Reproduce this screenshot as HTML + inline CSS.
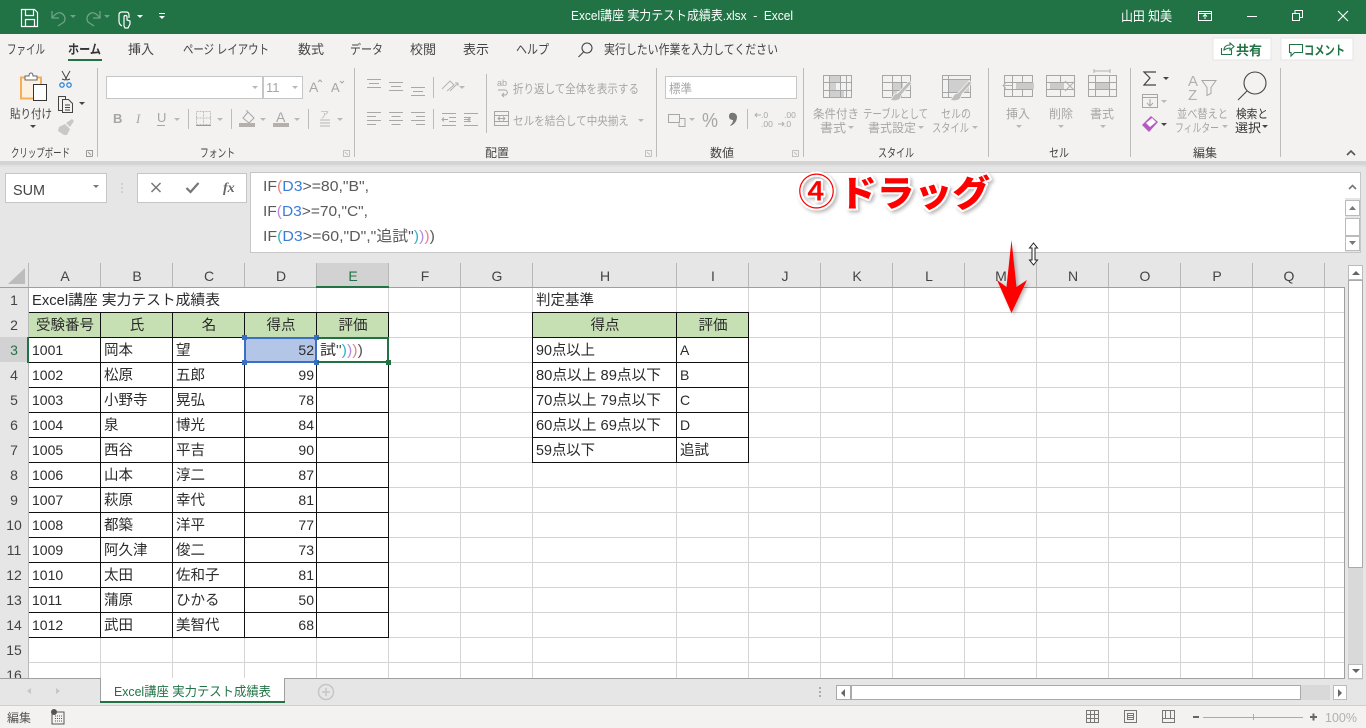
<!DOCTYPE html>
<html lang="ja"><head><meta charset="utf-8"><title>Excel</title>
<style>
html,body{margin:0;padding:0;background:#e6e6e6;overflow:hidden}
svg{display:block}
text{font-family:"Liberation Sans","Noto Sans CJK JP",sans-serif;white-space:pre}
.t{font-size:13px;fill:#444}
.d{font-size:12px;fill:#a6a6a6}
.g{font-size:12px;fill:#444}
.k{font-size:12px;fill:#333}
.h{font-size:14px;fill:#444;text-anchor:middle}
.c{font-size:14.5px;fill:#2b2b2b}
.n{font-size:14px;fill:#2b2b2b}
.cc{font-size:14.5px;fill:#2b2b2b;text-anchor:middle}
.r{font-size:14px;fill:#2b2b2b;text-anchor:end}
.f{font-size:15px;fill:#5a5a5a}
</style></head><body>
<svg xmlns="http://www.w3.org/2000/svg" width="1366" height="728" viewBox="0 0 1366 728">
<defs>
<path id="cr" d="M-3 0h6l-3 3z"/>
<filter id="sh" x="-30%" y="-30%" width="170%" height="170%"><feDropShadow dx="2" dy="2" stdDeviation="1.800" flood-color="#000" flood-opacity=".28"/></filter>
</defs>
<rect width="1366" height="728" fill="#e6e6e6"/>
<!-- title bar -->
<rect width="1366" height="34" fill="#217346"/>
<g fill="none" stroke="#fff" stroke-width="1.2">
<path d="M21.500 9.500h13l3 3v14h-16z"/><path d="M25.500 9.500v6h8v-6M25.500 26.500v-7h9v7"/>
<path d="M122 26c-2-1-3-3-3-5v-6c0-2 1-3 3-3h4c2 0 3 1 3 3v3M124 26v-9c0-2 3-2 3 0v3l3 1v3l-2 4h-3z"/>
</g>
<g fill="none" stroke="#6ea388" stroke-width="1.3">
<path d="M52 11v7h7M52 18c3-4 6-6 9-5 4 2 5 6 3 9l-6 4"/>
<path d="M100 11v7h-7M100 18c-3-4-6-6-9-5-4 2-5 6-3 9l6 4"/>
</g>
<g fill="#6ea388"><use href="#cr" x="73" y="15"/><use href="#cr" x="107" y="15"/></g>
<g fill="#fff"><use href="#cr" x="140" y="15"/><rect x="159" y="13" width="6" height="1"/><use href="#cr" x="162" y="16"/></g>
<text x="571" y="20" font-size="13" fill="#fff" textLength="222" lengthAdjust="spacingAndGlyphs">Excel講座 実力テスト成績表.xlsx  -  Excel</text>
<text x="1121" y="21" font-size="13.500" fill="#fff" textLength="51" lengthAdjust="spacingAndGlyphs">山田 知美</text>
<g fill="none" stroke="#fff" stroke-width="1">
<path d="M1198.500 11.500h13v9h-13zM1198.500 13.500h13M1205 19v-4M1203 16.500l2-2 2 2"/>
<path d="M1247 16.500h10"/>
<path d="M1292.500 13.500h7v7h-7zM1295 13v-2.500h7.500v7h-3"/>
<path d="M1338 11l10 10M1348 11l-10 10" stroke-width="1.100"/>
</g>
<!-- ribbon -->
<rect y="34" width="1366" height="127" fill="#f3f2f1"/>
<rect y="161" width="1366" height="4" fill="#d4d4d4"/>
<rect y="165" width="1366" height="2" fill="#e0e0e0"/>
<text class="t" x="7" y="54" textLength="38" lengthAdjust="spacingAndGlyphs">ファイル</text>
<text class="t" x="68" y="54" font-weight="700" textLength="33" lengthAdjust="spacingAndGlyphs" style="fill:#333">ホーム</text>
<rect x="68" y="59" width="34" height="2" fill="#217346"/>
<text class="t" x="128" y="54" textLength="26" lengthAdjust="spacingAndGlyphs">挿入</text>
<text class="t" x="183" y="54" textLength="86" lengthAdjust="spacingAndGlyphs">ページ レイアウト</text>
<text class="t" x="298" y="54" textLength="26" lengthAdjust="spacingAndGlyphs">数式</text>
<text class="t" x="350" y="54" textLength="33" lengthAdjust="spacingAndGlyphs">データ</text>
<text class="t" x="410" y="54" textLength="26" lengthAdjust="spacingAndGlyphs">校閲</text>
<text class="t" x="463" y="54" textLength="26" lengthAdjust="spacingAndGlyphs">表示</text>
<text class="t" x="516" y="54" textLength="33" lengthAdjust="spacingAndGlyphs">ヘルプ</text>
<g fill="none" stroke="#444" stroke-width="1.100"><circle cx="587" cy="48" r="5"/><path d="M583.500 52l-5 5"/></g>
<text class="t" x="604" y="54" textLength="174" lengthAdjust="spacingAndGlyphs">実行したい作業を入力してください</text>
<!-- share/comment -->
<rect x="1213" y="38" width="58" height="22" fill="#fff" stroke="#e4e4e4"/>
<rect x="1281" y="38" width="72" height="22" fill="#fff" stroke="#e4e4e4"/>
<g fill="none" stroke="#217346" stroke-width="1.100">
<path d="M1221.500 48v6.500h10v-5M1224 50c0-3 2-5 6-5v-2l4 3.500-4 3.500v-2c-3 0-4 1-6 2z"/>
<path d="M1289.500 44.500h13v8h-8l-3.500 3.500v-3.500h-1.500z"/>
</g>
<text x="1236" y="55" font-size="13" font-weight="700" fill="#217346" textLength="26" lengthAdjust="spacingAndGlyphs">共有</text>
<text x="1304" y="55" font-size="13" font-weight="700" fill="#217346" textLength="41" lengthAdjust="spacingAndGlyphs">コメント</text>
<!-- separators -->
<g fill="#bdbcbb"><rect x="97" y="68" width="1" height="89"/><rect x="354" y="68" width="1" height="89"/><rect x="656" y="68" width="1" height="89"/><rect x="803" y="68" width="1" height="89"/><rect x="988" y="68" width="1" height="89"/><rect x="1130" y="68" width="1" height="89"/><rect x="1280" y="68" width="1" height="89"/>
<rect x="188" y="109" width="1" height="20"/><rect x="231" y="109" width="1" height="20"/><rect x="308" y="109" width="1" height="20"/><rect x="433" y="77" width="1" height="21"/><rect x="433" y="109" width="1" height="20"/><rect x="486" y="74" width="1" height="59"/><rect x="747" y="109" width="1" height="20"/></g>
<!-- group labels -->
<text class="g" x="11" y="157" textLength="59" lengthAdjust="spacingAndGlyphs">クリップボード</text>
<text class="g" x="200" y="157" textLength="35" lengthAdjust="spacingAndGlyphs">フォント</text>
<text class="g" x="485" y="157" textLength="24" lengthAdjust="spacingAndGlyphs">配置</text>
<text class="g" x="710" y="157" textLength="24" lengthAdjust="spacingAndGlyphs">数値</text>
<text class="g" x="878" y="157" textLength="36" lengthAdjust="spacingAndGlyphs">スタイル</text>
<text class="g" x="1049" y="157" textLength="20" lengthAdjust="spacingAndGlyphs">セル</text>
<text class="g" x="1193" y="157" textLength="24" lengthAdjust="spacingAndGlyphs">編集</text>
<g fill="none" stroke="#9a9a9a"><path d="M86.500 150.500h6v6M86.500 150.500v6h6M88 152l3 3"/><path d="M343.500 150.500h6v6M343.500 150.500v6h6M345 152l3 3" stroke="#c0c0c0"/><path d="M645.500 150.500h6v6M645.500 150.500v6h6M647 152l3 3" stroke="#c0c0c0"/><path d="M792.500 150.500h6v6M792.500 150.500v6h6M794 152l3 3" stroke="#c0c0c0"/></g>
<path d="M1347 155l4-4 4 4" fill="none" stroke="#555" stroke-width="1.600"/>
<!-- clipboard -->
<path d="M21 77.500h20v21h-20z" fill="#fbf1e0" stroke="#f4ae55" stroke-width="2"/>
<path d="M25 76h4c0-4 4-4 4 0h4v4h-12z" fill="#fff" stroke="#666"/>
<rect x="33.500" y="84.500" width="13" height="16" fill="#fff" stroke="#333"/>
<text class="g" x="10" y="118" textLength="42" lengthAdjust="spacingAndGlyphs">貼り付け</text>
<g fill="#444"><use href="#cr" x="33" y="125"/><use href="#cr" x="82" y="102"/></g>
<g fill="none" stroke="#444"><path d="M62 71l5 9 3-1M70 71l-5 9-3-1"/><path d="M58.500 96.500h7v14h-7z"/><path d="M62.500 99.500h6l4 4v9h-10z" fill="#f3f2f1"/><path d="M65 105h5M65 107.500h5M65 110h5"/></g>
<circle cx="62" cy="85" r="2.200" fill="none" stroke="#2b88d8" stroke-width="1.300"/><circle cx="69" cy="85" r="2.200" fill="none" stroke="#2b88d8" stroke-width="1.300"/>
<path d="M59 127l6-3 5 5-3 6h-3l-6-4zM66 123l6-4 2 2-4 6z" fill="#c8c8c8"/>
<!-- font -->
<rect x="106.500" y="76.500" width="156" height="22" fill="#fff" stroke="#c6c6c6"/>
<rect x="263.500" y="76.500" width="39" height="22" fill="#fff" stroke="#c6c6c6"/>
<text x="266" y="92" font-size="13" fill="#a6a6a6">11</text>
<g fill="#b8b8b8"><use href="#cr" x="255" y="86"/><use href="#cr" x="295" y="86"/><use href="#cr" x="177" y="118"/><use href="#cr" x="220" y="118"/><use href="#cr" x="263" y="118"/><use href="#cr" x="297" y="118"/><use href="#cr" x="340" y="118"/><use href="#cr" x="462" y="86"/><use href="#cr" x="641" y="119"/><use href="#cr" x="692" y="118"/><use href="#cr" x="788" y="86"/><use href="#cr" x="851" y="126"/><use href="#cr" x="921" y="126"/><use href="#cr" x="975" y="126"/><use href="#cr" x="1019" y="125"/><use href="#cr" x="1061" y="125"/><use href="#cr" x="1103" y="125"/><use href="#cr" x="1164" y="100"/><use href="#cr" x="1225" y="125"/></g>
<g fill="#444"><use href="#cr" x="1166" y="77"/><use href="#cr" x="1164" y="123"/><use href="#cr" x="1265" y="125"/></g>
<text x="309" y="92" font-size="14" fill="#a6a6a6">A</text><text x="331" y="92" font-size="13" fill="#a6a6a6">A</text>
<path d="M318 82l2-2 2 2M340 81l2 2 2-2" fill="none" stroke="#a6a6a6"/>
<text x="113" y="123" font-size="13" font-weight="700" fill="#a6a6a6">B</text>
<text x="136" y="123" font-size="13" font-style="italic" style="font-family:'Liberation Serif',serif" fill="#a6a6a6">I</text>
<text x="157" y="122" font-size="13" fill="#a6a6a6">U</text><rect x="157" y="125" width="8" height="1" fill="#a6a6a6"/>
<path d="M196.500 111.500h14v13h-14zM203.500 111.500v13M196.500 118h14" fill="none" stroke="#bdbdbd" stroke-dasharray="2 1"/><rect x="196" y="125" width="15" height="1" fill="#999"/>
<path d="M243 118l5-6 6 6-5 5zM247 112v-2" fill="none" stroke="#a6a6a6"/><rect x="239" y="123" width="16" height="4" fill="#b3b0ad"/>
<text x="276" y="122" font-size="14" fill="#a6a6a6">A</text><rect x="273" y="123" width="16" height="4" fill="#b3b0ad"/>
<text x="320" y="118" font-size="9" fill="#b5b5b5">ア</text><path d="M320 120h10M320 123h10M320 126h10" stroke="#b5b5b5"/>
<!-- align -->
<path d="M367 79.500h14M369 83.500h10M367 87.500h14M389 82.500h14M391 86.500h10M389 90.500h14M411 87.500h14M413 91.500h10M411 95.500h14M367 112.500h14M367 116.500h9M367 120.500h14M367 124.500h9M389 112.500h14M391.500 116.500h9M389 120.500h14M391.500 124.500h9M411 112.500h14M416 116.500h9M411 120.500h14M416 124.500h9M442 113.500h14M449 117.500h7M449 121.500h7M442 125.500h14M464 113.500h14M464 117.500h7M464 121.500h7M464 125.500h14M448 119.500h-6m2-2l-2 2 2 2M464 119.500h6m-2-2l2 2-2 2" fill="none" stroke="#a8a8a8"/>
<path d="M442 89l8-8 4 4-7 6M450 91l8-8m-3 0h3v3" fill="none" stroke="#b5b5b5"/>
<text x="497" y="86" font-size="9" fill="#a6a6a6">ab</text><path d="M498 90h7c3 0 3 5 0 5h-2m1-2l-2 2 2 2" fill="none" stroke="#a6a6a6"/>
<text class="d" x="513" y="93" textLength="126" lengthAdjust="spacingAndGlyphs">折り返して全体を表示する</text>
<path d="M494.500 111.500h14v14h-14zM494.500 115.500h14M494.500 121.500h14M498 118.500h7m-5-2l-2 2 2 2m3-4l2 2-2 2" fill="none" stroke="#a6a6a6"/>
<text class="d" x="513" y="125" textLength="116" lengthAdjust="spacingAndGlyphs">セルを結合して中央揃え</text>
<!-- number -->
<rect x="665.500" y="76.500" width="131" height="22" fill="#fff" stroke="#c6c6c6"/>
<text class="d" x="669" y="93" textLength="23" lengthAdjust="spacingAndGlyphs" style="font-size:12.500px">標準</text>
<path d="M668.500 114.500h11v8h-11zM680 118.500h5v8h-6v-3" fill="none" stroke="#a6a6a6"/>
<text x="702" y="127" font-size="20" fill="#a6a6a6" textLength="16" lengthAdjust="spacingAndGlyphs">%</text>
<path d="M731 113c3-1 6 1 6 4 0 4-3 8-7 9 1-2 3-3 3-6-2 0-4-1-4-3.500 0-2 1-3.500 2-3.500z" fill="#777"/>
<text x="761" y="118" font-size="8.500" fill="#a6a6a6">.0</text><text x="761" y="127" font-size="8.500" fill="#a6a6a6">.00</text><text x="784" y="118" font-size="8.500" fill="#a6a6a6">.00</text><text x="784" y="127" font-size="8.500" fill="#a6a6a6">.0</text>
<path d="M761 115h-6m2-2l-2 2 2 2M778 124h6m-2-2l2 2-2 2" fill="none" stroke="#b0b0b0"/>
<!-- styles -->
<g fill="#cfcfcf"><path d="M829 75h11v7h-11zM829 82h7v8h-7zM829 90h15v7h-15z"/><path d="M892 82h11v8h-11zM892 90h5v7h-5z"/><path d="M949 79h20v13h-20z"/></g>
<path d="M823.500 75.500h28v22h-28zM823.500 82.500h28M823.500 90.500h28M829.500 75.500v22M840.500 75.500v22M846.500 75.500v22M882.500 75.500h28v22h-28zM882.500 82.500h28M882.500 90.500h28M892.500 75.500v22M901.500 75.500v22M942.500 75.500h28v22h-28zM942.500 79.500h28M942.500 92.500h28M948.500 75.500v22M1004.500 75.500h28v21h-28zM1004.500 82.500h28M1004.500 89.500h28M1012.500 75.500v21M1022.500 75.500v21M1046.500 75.500h28v21h-28zM1046.500 82.500h28M1046.500 89.500h28M1060.500 75.500v21M1088.500 75.500h28v21h-28zM1088.500 82.500h28M1088.500 89.500h28M1095.500 75.500v21M1109.500 75.500v21" fill="none" stroke="#a6a6a6"/>
<path d="M912 83l-10 11-2 5c-3 2-7 2-10 1 3-2 3-5 5-6l3-1 11-12zM972 83l-10 11-2 5c-3 2-7 2-10 1 3-2 3-5 5-6l3-1 11-12z" fill="#bdbdbd" stroke="#f3f2f1" stroke-width=".8"/>
<g fill="#cacaca"><rect x="1016" y="83" width="18" height="6"/><rect x="1050" y="83" width="14" height="6"/><rect x="1096" y="83" width="13" height="6"/></g>
<path d="M1012 85.500h-9m3-3l-3 3 3 3" fill="#f3f2f1" stroke="#b0b0b0"/>
<path d="M1065 81l10 10m0-10l-10 10M1094 71h16M1094 69v4M1110 69v4" fill="none" stroke="#b0b0b0"/>
<text class="d" x="813" y="118" textLength="46" lengthAdjust="spacingAndGlyphs">条件付き</text>
<text class="d" x="820" y="132" textLength="26" lengthAdjust="spacingAndGlyphs">書式</text>
<text class="d" x="863" y="118" textLength="65" lengthAdjust="spacingAndGlyphs">テーブルとして</text>
<text class="d" x="868" y="132" textLength="48" lengthAdjust="spacingAndGlyphs">書式設定</text>
<text class="d" x="941" y="118" textLength="30" lengthAdjust="spacingAndGlyphs">セルの</text>
<text class="d" x="932" y="132" textLength="37" lengthAdjust="spacingAndGlyphs">スタイル</text>
<text class="d" x="1006" y="118" textLength="24" lengthAdjust="spacingAndGlyphs">挿入</text>
<text class="d" x="1049" y="118" textLength="24" lengthAdjust="spacingAndGlyphs">削除</text>
<text class="d" x="1090" y="118" textLength="24" lengthAdjust="spacingAndGlyphs">書式</text>
<!-- editing -->
<path d="M1156 72h-12l6 6-6 7h12" fill="none" stroke="#444" stroke-width="1.200"/>
<path d="M1142.500 94.500h15v13h-15zM1142.500 97.500h15M1150 99v7m-3-3l3 3 3-3" fill="none" stroke="#a6a6a6"/>
<path d="M1142 125l9-9 7 6-9 10z" fill="#b657c4"/><path d="M1146 123l6-5 4 4-6 5z" fill="#fff"/>
<text x="1188" y="86" font-size="15" fill="#b0b0b0">A</text><text x="1188" y="100" font-size="15" fill="#b0b0b0">Z</text>
<path d="M1202 80.500h14l-5 7v6l-4 2v-8z" fill="none" stroke="#a6a6a6"/>
<text class="d" x="1177" y="118" textLength="51" lengthAdjust="spacingAndGlyphs">並べ替えと</text>
<text class="d" x="1175" y="132" textLength="44" lengthAdjust="spacingAndGlyphs">フィルター</text>
<g fill="none" stroke="#444" stroke-width="1.100"><circle cx="1255" cy="83" r="11"/><path d="M1247 91l-9 9"/></g>
<text class="k" x="1236" y="118" textLength="32" lengthAdjust="spacingAndGlyphs">検索と</text>
<text class="k" x="1235" y="132" textLength="26" lengthAdjust="spacingAndGlyphs">選択</text>
<!-- formula bar -->
<rect x="5.500" y="173.500" width="101" height="29" fill="#fff" stroke="#c6c6c6"/>
<text x="13" y="195" font-size="15" fill="#444" textLength="32" lengthAdjust="spacingAndGlyphs">SUM</text>
<use href="#cr" x="96" y="185" fill="#777"/>
<path d="M122 183.500v1M122 187.500v1M122 191.500v1" stroke="#aaa" stroke-width="1.500"/>
<rect x="137.500" y="173.500" width="109" height="29" fill="#fff" stroke="#c6c6c6"/>
<path d="M151.500 183l9 9m0-9l-9 9" stroke="#777" stroke-width="1.500" fill="none"/>
<path d="M186.500 188l4 4 8-9" stroke="#777" stroke-width="2.200" fill="none"/>
<text x="223" y="192" font-size="14" font-style="italic" font-weight="700" fill="#666" style="font-family:'Liberation Serif',serif">fx</text>
<rect x="250.500" y="172.500" width="1110" height="80" fill="#fff" stroke="#c6c6c6"/>
<text class="f" x="263" y="191" textLength="106" lengthAdjust="spacingAndGlyphs">IF<tspan fill="#e8828a">(</tspan><tspan fill="#3b7dd8">D3</tspan>&gt;=80,"B",</text>
<text class="f" x="263" y="216" textLength="105" lengthAdjust="spacingAndGlyphs">IF<tspan fill="#b48be0">(</tspan><tspan fill="#3b7dd8">D3</tspan>&gt;=70,"C",</text>
<text class="f" x="263" y="241" textLength="172" lengthAdjust="spacingAndGlyphs">IF<tspan fill="#35b3c4">(</tspan><tspan fill="#3b7dd8">D3</tspan>&gt;=60,"D","追試"<tspan fill="#35b3c4">)</tspan><tspan fill="#b48be0">)</tspan><tspan fill="#e8828a">)</tspan><tspan fill="#5a5a5a">)</tspan></text>
<rect x="1345" y="198" width="15" height="54" fill="#e6e6e6"/>
<rect x="1345.500" y="200.500" width="14" height="15" fill="#fff" stroke="#bbb"/>
<rect x="1345.500" y="218.500" width="14" height="17" fill="#fff" stroke="#bbb"/>
<rect x="1345.500" y="236.500" width="14" height="14" fill="#fff" stroke="#bbb"/>
<path d="M1349 189l3.500-3.500 3.500 3.500" fill="none" stroke="#777" stroke-width="1.600"/>
<path d="M1349 210h7l-3.500-4zM1349 241h7l-3.500 4z" fill="#777"/>
<!-- sheet -->
<rect x="29" y="288" width="1315" height="390" fill="#fff"/>
<rect x="0" y="263" width="1345" height="25" fill="#e6e6e6"/>
<rect x="316" y="263" width="73" height="24" fill="#d2d2d2"/>
<rect x="0" y="337" width="28" height="25" fill="#d2d2d2"/>
<path d="M25 268v16h-17z" fill="#bcbcbc"/>
<path d="M28.500 263v415M100.500 263v24M172.500 263v24M244.500 263v24M316.500 263v24M388.500 263v24M460.500 263v24M532.500 263v24M676.500 263v24M748.500 263v24M820.500 263v24M892.500 263v24M964.500 263v24M1036.500 263v24M1108.500 263v24M1180.500 263v24M1252.500 263v24M1324.500 263v24" stroke="#b8b8b8" fill="none"/>
<path d="M0 287.500h1345M1344.500 287v391" stroke="#9f9f9f" fill="none"/>
<path d="M29 312.500h1315M29 337.500h1315M29 362.500h1315M29 387.500h1315M29 412.500h1315M29 437.500h1315M29 462.500h1315M29 487.500h1315M29 512.500h1315M29 537.500h1315M29 562.500h1315M29 587.500h1315M29 612.500h1315M29 637.500h1315M29 662.500h1315M100.500 288v390M172.500 288v390M244.500 288v390M316.500 288v390M388.500 288v390M460.500 288v390M532.500 288v390M676.500 288v390M748.500 288v390M820.500 288v390M892.500 288v390M964.500 288v390M1036.500 288v390M1108.500 288v390M1180.500 288v390M1252.500 288v390M1324.500 288v390" stroke="#d4d4d4" fill="none"/>
<rect x="29" y="288" width="360" height="24" fill="#fff"/><path d="M316.500 288v24M388.500 288v24" stroke="#d4d4d4"/>
<rect x="29" y="313" width="359" height="24" fill="#c6dfb3"/>
<rect x="533" y="313" width="215" height="24" fill="#c6dfb3"/>
<path d="M29 312.500h360M29 337.500h360M29 362.500h360M29 387.500h360M29 412.500h360M29 437.500h360M29 462.500h360M29 487.500h360M29 512.500h360M29 537.500h360M29 562.500h360M29 587.500h360M29 612.500h360M29 637.500h360M100.500 312v326M172.500 312v326M244.500 312v326M316.500 312v326M388.500 312v326M532 312.500h217M532 337.500h217M532 362.500h217M532 387.500h217M532 412.500h217M532 437.500h217M532 462.500h217M532.500 312v151M676.500 312v151M748.500 312v151" stroke="#111" fill="none"/>
<!-- headers -->
<g>
<text class="h" x="65" y="281">A</text><text class="h" x="137" y="281">B</text><text class="h" x="209" y="281">C</text><text class="h" x="281" y="281">D</text><text class="h" x="353" y="281" style="fill:#217346">E</text><text class="h" x="425" y="281">F</text><text class="h" x="497" y="281">G</text><text class="h" x="605" y="281">H</text><text class="h" x="713" y="281">I</text><text class="h" x="785" y="281">J</text><text class="h" x="857" y="281">K</text><text class="h" x="929" y="281">L</text><text class="h" x="1001" y="281">M</text><text class="h" x="1073" y="281">N</text><text class="h" x="1145" y="281">O</text><text class="h" x="1217" y="281">P</text><text class="h" x="1289" y="281">Q</text>
<text class="h" x="14" y="305">1</text><text class="h" x="14" y="330">2</text><text class="h" x="14" y="355" style="fill:#217346">3</text><text class="h" x="14" y="380">4</text><text class="h" x="14" y="405">5</text><text class="h" x="14" y="430">6</text><text class="h" x="14" y="455">7</text><text class="h" x="14" y="480">8</text><text class="h" x="14" y="505">9</text><text class="h" x="14" y="530">10</text><text class="h" x="14" y="555">11</text><text class="h" x="14" y="580">12</text><text class="h" x="14" y="605">13</text><text class="h" x="14" y="630">14</text><text class="h" x="14" y="655">15</text><text class="h" x="14" y="680">16</text>
</g>
<rect x="316" y="286" width="73" height="2" fill="#217346"/>
<rect x="27" y="337" width="2" height="26" fill="#217346"/>
<!-- cells -->
<text class="c" x="32" y="305" textLength="188" lengthAdjust="spacingAndGlyphs">Excel講座 実力テスト成績表</text>
<text class="cc" x="65" y="330" textLength="58" lengthAdjust="spacingAndGlyphs">受験番号</text><text class="cc" x="137" y="330">氏</text><text class="cc" x="209" y="330">名</text><text class="cc" x="281" y="330">得点</text><text class="cc" x="353" y="330">評価</text>
<text class="n" x="32" y="355">1001</text><text class="c" x="104" y="355">岡本</text><text class="c" x="176" y="355">望</text>
<text class="n" x="32" y="380">1002</text><text class="c" x="104" y="380">松原</text><text class="c" x="176" y="380">五郎</text><text class="r" x="314" y="380">99</text>
<text class="n" x="32" y="405">1003</text><text class="c" x="104" y="405">小野寺</text><text class="c" x="176" y="405">晃弘</text><text class="r" x="314" y="405">78</text>
<text class="n" x="32" y="430">1004</text><text class="c" x="104" y="430">泉</text><text class="c" x="176" y="430">博光</text><text class="r" x="314" y="430">84</text>
<text class="n" x="32" y="455">1005</text><text class="c" x="104" y="455">西谷</text><text class="c" x="176" y="455">平吉</text><text class="r" x="314" y="455">90</text>
<text class="n" x="32" y="480">1006</text><text class="c" x="104" y="480">山本</text><text class="c" x="176" y="480">淳二</text><text class="r" x="314" y="480">87</text>
<text class="n" x="32" y="505">1007</text><text class="c" x="104" y="505">萩原</text><text class="c" x="176" y="505">幸代</text><text class="r" x="314" y="505">81</text>
<text class="n" x="32" y="530">1008</text><text class="c" x="104" y="530">都築</text><text class="c" x="176" y="530">洋平</text><text class="r" x="314" y="530">77</text>
<text class="n" x="32" y="555">1009</text><text class="c" x="104" y="555">阿久津</text><text class="c" x="176" y="555">俊二</text><text class="r" x="314" y="555">73</text>
<text class="n" x="32" y="580">1010</text><text class="c" x="104" y="580">太田</text><text class="c" x="176" y="580">佐和子</text><text class="r" x="314" y="580">81</text>
<text class="n" x="32" y="605">1011</text><text class="c" x="104" y="605">蒲原</text><text class="c" x="176" y="605">ひかる</text><text class="r" x="314" y="605">50</text>
<text class="n" x="32" y="630">1012</text><text class="c" x="104" y="630">武田</text><text class="c" x="176" y="630">美智代</text><text class="r" x="314" y="630">68</text>
<text class="c" x="536" y="305">判定基準</text>
<text class="cc" x="605" y="330">得点</text><text class="cc" x="713" y="330">評価</text>
<text class="c" x="536" y="355" textLength="59" lengthAdjust="spacingAndGlyphs">90点以上</text><text class="n" x="680" y="355">A</text>
<text class="c" x="536" y="380" textLength="125" lengthAdjust="spacingAndGlyphs">80点以上 89点以下</text><text class="n" x="680" y="380">B</text>
<text class="c" x="536" y="405" textLength="125" lengthAdjust="spacingAndGlyphs">70点以上 79点以下</text><text class="n" x="680" y="405">C</text>
<text class="c" x="536" y="430" textLength="125" lengthAdjust="spacingAndGlyphs">60点以上 69点以下</text><text class="n" x="680" y="430">D</text>
<text class="c" x="536" y="455" textLength="59" lengthAdjust="spacingAndGlyphs">59点以下</text><text class="c" x="680" y="455">追試</text>
<!-- selection -->
<rect x="245" y="338" width="71" height="24" fill="#b4c6e7"/>
<text class="r" x="314" y="355">52</text>
<rect x="245" y="338" width="71" height="24" fill="none" stroke="#3a6fc4" stroke-width="2"/>
<g fill="#3a6fc4"><rect x="242" y="335" width="5" height="5"/><rect x="314" y="335" width="5" height="5"/><rect x="242" y="360" width="5" height="5"/><rect x="314" y="360" width="5" height="5"/></g>
<path d="M317 338h71v24h-71" fill="none" stroke="#217346" stroke-width="2"/>
<rect x="386" y="360" width="5" height="5" fill="#217346"/>
<text class="c" x="320" y="355" textLength="43" lengthAdjust="spacingAndGlyphs">試<tspan fill="#555">"</tspan><tspan fill="#35b3c4">)</tspan><tspan fill="#b48be0">)</tspan><tspan fill="#e8828a">)</tspan><tspan fill="#555">)</tspan></text>
<!-- tab bar -->
<rect x="0" y="678" width="1345" height="28" fill="#e6e6e6"/>
<rect x="0" y="678" width="100" height="1" fill="#9f9f9f"/><rect x="285" y="678" width="1060" height="1" fill="#9f9f9f"/>
<path d="M100.500 678v25M284.500 678v25" stroke="#9f9f9f"/>
<rect x="101" y="678" width="183" height="23" fill="#fff"/>
<rect x="100" y="701" width="185" height="2" fill="#217346"/>
<text x="114" y="696" font-size="13" fill="#217346" textLength="157" lengthAdjust="spacingAndGlyphs">Excel講座 実力テスト成績表</text>
<path d="M31 688v6l-4-3zM56 688v6l4-3z" fill="#c6c6c6"/>
<circle cx="326" cy="692" r="7.500" fill="none" stroke="#c6c6c6" stroke-width="1.500"/><path d="M326 688v8M322 692h8" stroke="#c6c6c6" stroke-width="1.500"/>
<path d="M820 687v2M820 691v2M820 695v2" stroke="#999" stroke-width="1.500"/>
<rect x="836.500" y="685.500" width="14" height="14" fill="#fff" stroke="#aaa"/>
<rect x="851.500" y="685.500" width="449" height="14" fill="#fff" stroke="#aaa"/>
<rect x="1301" y="685" width="29" height="15" fill="#d9d9d9"/>
<rect x="1333.500" y="685.500" width="13" height="14" fill="#fff" stroke="#bbb"/>
<path d="M845 689v8l-4-4zM1338 689v8l4-4z" fill="#666"/>
<!-- v scrollbar -->
<rect x="1348" y="265" width="15" height="415" fill="#d9d9d9"/>
<rect x="1348.500" y="265.500" width="14" height="14" fill="#fff" stroke="#bbb"/>
<rect x="1348.500" y="280.500" width="14" height="287" fill="#fff" stroke="#aaa"/>
<rect x="1348.500" y="664.500" width="14" height="14" fill="#fff" stroke="#bbb"/>
<path d="M1352 275h8l-4-4zM1352 669h8l-4 4z" fill="#666"/>
<!-- status -->
<rect y="706" width="1366" height="22" fill="#f3f2f1"/>
<rect y="705" width="1366" height="1" fill="#cfcfcf"/>
<text x="7" y="722" font-size="12" fill="#555" textLength="24" lengthAdjust="spacingAndGlyphs">編集</text>
<path d="M52 712h12v12h-12z" fill="none" stroke="#555"/><circle cx="54" cy="712" r="3" fill="#555"/><path d="M55 716h7M55 718.500h7M55 721h7" stroke="#555" stroke-dasharray="1 1"/>
<path d="M1086.500 710.500h12v12h-12zM1090.500 710.500v12M1094.500 710.500v12M1086.500 714.500h12M1086.500 718.500h12M1124.500 710.500h12v12h-12zM1127.500 713.500h6v6h-6zM1128 715.500h5M1128 717.500h5M1162.500 710.500h12v12h-12zM1162.500 718.500h12M1165.500 710.500v8M1170.500 710.500v8" fill="none" stroke="#777"/>
<rect x="1193" y="716" width="6" height="2" fill="#666"/>
<rect x="1203" y="717" width="100" height="1" fill="#aaa"/><rect x="1253" y="714" width="1" height="6" fill="#aaa"/>
<path d="M1310 717h7M1313.500 713.500v7" stroke="#666" stroke-width="2"/>
<text x="1325" y="722" font-size="12.500" fill="#b0b0b0">100%</text>
<!-- annotation -->
<g filter="url(#sh)">
<text x="798" y="205" fill="#f00" stroke="#fff" stroke-width="4" paint-order="stroke" stroke-linejoin="round" style="font-family:'Noto Sans CJK JP',sans-serif;font-size:37px;font-weight:500">④</text>
<text x="839" y="206" fill="#f00" stroke="#fff" stroke-width="4" paint-order="stroke" stroke-linejoin="round" textLength="151" lengthAdjust="spacingAndGlyphs" style="font-family:'Noto Sans CJK JP',sans-serif;font-size:36px;font-weight:900">ドラッグ</text>
</g>
<path d="M1011.500 240l5 47 10.500-7-15.500 33-14.500-33 9.500 7z" fill="#f00" filter="url(#sh)"/>
<path d="M1033.500 243l4 5h-2.500v12h2.500l-4 5-4-5h2.500v-12h-2.500z" fill="#fff" stroke="#222"/>
</svg>
</body></html>
